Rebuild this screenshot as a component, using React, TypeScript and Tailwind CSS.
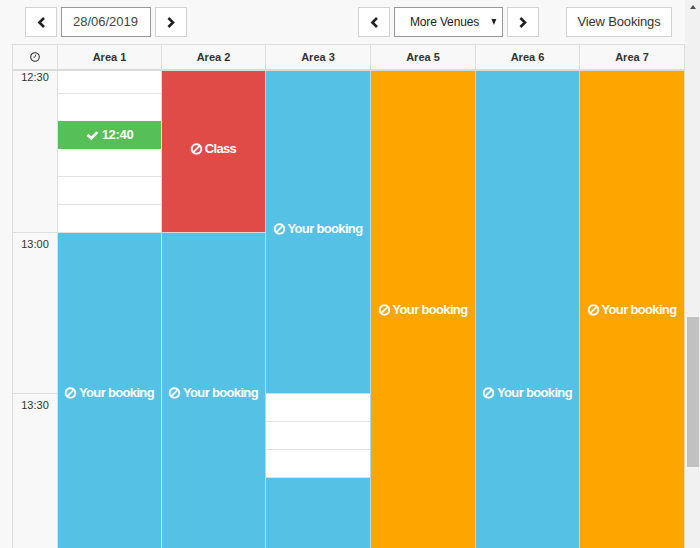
import React from "react";

const CHEVRON_LEFT = "M9 2 4.4 6.5 9 11";
const CHEVRON_RIGHT = "M3.4 2 8 6.5 3.4 11";

function Chevron({ d }: { d: string }) {
  return (
    <svg viewBox="0 0 12 13" className="h-[13px] w-3" fill="none" stroke="#222" strokeWidth="2.6">
      <path d={d} />
    </svg>
  );
}

function Ban() {
  return (
    <svg
      viewBox="0 70 1792 1792"
      className="mr-[2px] h-[13px] w-[13px] shrink-0"
      fill="currentColor"
      stroke="currentColor"
      strokeWidth="40"
    >
      <path d="M1440 893q0-161-87-295l-754 753q137 89 297 89 111 0 211.5-43.5t173.5-116.5 116-174.5 43-212.5zm-999 299l755-754q-135-91-300-91-148 0-273 73t-198 199-73 274q0 162 89 299zm1223-299q0 157-61 300t-163.5 246-245 164-298.5 61-298.5-61-245-164-163.5-246-61-300 61-299.5 163.5-245.5 245-164 298.5-61 298.5 61 245 164 163.5 245.5 61 299.5z" />
    </svg>
  );
}

function Check() {
  return (
    <svg viewBox="0 0 1792 1792" className="mr-[3px] h-[13px] w-[13px] shrink-0" fill="currentColor">
      <path d="M1671 566q0 40-28 68l-724 724-136 136q-28 28-68 28t-68-28l-136-136-362-362q-28-28-28-68t28-68l136-136q28-28 68-28t68 28l294 295 656-657q28-28 68-28t68 28l136 136q28 28 28 68z" />
    </svg>
  );
}

function Clock() {
  return (
    <svg viewBox="0 0 10 10" className="h-[10px] w-[10px]" fill="none" stroke="#333">
      <circle cx="5" cy="5" r="4.3" strokeWidth="1.1" />
      <path d="M5.9 2.4 5 5.2H3.4" strokeWidth="0.8" />
    </svg>
  );
}

function NavButton({ d }: { d: string }) {
  return (
    <button className="flex h-[30px] w-8 items-center justify-center border border-[#d2d2d2] bg-white">
      <Chevron d={d} />
    </button>
  );
}

function Booking({ label, className, labelClass }: { label: string; className: string; labelClass: string }) {
  return (
    <div className={`flex justify-center pr-px text-[13px] leading-4 font-bold tracking-[-0.66px] text-white ${className}`}>
      <div className={`flex h-4 items-center whitespace-nowrap ${labelClass}`}>
        <Ban />
        <span>{label}</span>
      </div>
    </div>
  );
}

const COLS = "grid grid-cols-[45px_104px_104px_105px_105px_104px_105px]";
const AREAS = ["Area 1", "Area 2", "Area 3", "Area 5", "Area 6", "Area 7"];
const SLOT = "border-b border-[#e2e2e2] bg-white";
const COLUMN = "flex flex-col border-r border-[#b4dbe5]";

export default function App() {
  return (
    <div className="flex h-[548px] w-[700px] overflow-hidden bg-[#f8f8f8] font-['Liberation_Sans',Arial,sans-serif] text-[#333]">
      <div className="flex w-[685px] flex-col pl-3">
        <div className="flex h-11 items-start pt-[7px] pl-[13px]">
          <NavButton d={CHEVRON_LEFT} />
          <div className="ml-[4px] flex h-[30px] w-[90px] items-center justify-center border border-[#999] bg-white pr-px text-[13px] text-[#444]">
            28/06/2019
          </div>
          <div className="ml-[4px]">
            <NavButton d={CHEVRON_RIGHT} />
          </div>
          <div className="ml-[171px]">
            <NavButton d={CHEVRON_LEFT} />
          </div>
          <div className="ml-[4px] flex h-[30px] w-[109px] items-center border border-[#999] bg-white pl-[15px] text-[12px] text-[#222]">
            <span className="w-[69px] tracking-[-0.15px] whitespace-nowrap">More Venues</span>
            <svg viewBox="0 0 6 6" className="ml-[12px] h-[6px] w-[6px]" fill="#222">
              <path d="M0.4 0H5.4L2.9 6Z" />
            </svg>
          </div>
          <div className="ml-[4px]">
            <NavButton d={CHEVRON_RIGHT} />
          </div>
          <button className="ml-[27px] h-[30px] w-[106px] border border-[#d2d2d2] bg-white text-[13px] tracking-[-0.15px] whitespace-nowrap text-[#333]">
            View Bookings
          </button>
        </div>

        <div className="flex flex-1 flex-col border-l border-[#dedede]">
          <div className={`${COLS} h-[27px] border-t border-b-2 border-t-[#dedede] border-b-[#dadada] text-[11px] font-bold`}>
            <div className="flex items-center justify-center border-r border-[#dedede]">
              <Clock />
            </div>
            {AREAS.map((a) => (
              <div key={a} className="flex items-center justify-center border-r border-[#dedede]">
                {a}
              </div>
            ))}
          </div>

          <div className={`${COLS} h-[477px]`}>
            <div className="flex flex-col border-r border-[#dedede] text-center text-[11px] leading-[13px]">
              <div className="h-[162px] border-b border-[#dedede]">12:30</div>
              <div className="h-[161px] border-b border-[#dedede] pt-[5px]">13:00</div>
              <div className="pt-[5px]">13:30</div>
            </div>

            <div className="flex flex-col border-r border-[#dedede]">
              <div className={`${SLOT} h-[23px]`} />
              <div className="h-[27px] bg-white" />
              <div className="flex h-[28px] items-center justify-center bg-[#57bf57] text-[13px] font-bold tracking-[-0.3px] text-white">
                <Check />
                12:40
              </div>
              <div className={`${SLOT} h-[28px]`} />
              <div className={`${SLOT} h-[28px]`} />
              <div className={`${SLOT} h-[28px]`} />
              <Booking label="Your booking" className="flex-1 bg-[#54c1e5]" labelClass="mt-[152px]" />
            </div>

            <div className={COLUMN}>
              <Booking label="Class" className="h-[162px] border-b border-[#d7d7d7] bg-[#e04b47]" labelClass="mt-[70px]" />
              <Booking label="Your booking" className="flex-1 bg-[#54c1e5]" labelClass="mt-[152px]" />
            </div>

            <div className={COLUMN}>
              <Booking label="Your booking" className="h-[323px] border-b border-[#c5dfe6] bg-[#54c1e5]" labelClass="mt-[150px]" />
              <div className={`${SLOT} h-[28px]`} />
              <div className={`${SLOT} h-[28px]`} />
              <div className={`${SLOT} h-[28px]`} />
              <div className="flex-1 bg-[#54c1e5]" />
            </div>

            <div className={COLUMN}>
              <Booking label="Your booking" className="flex-1 bg-[#ffa500]" labelClass="mt-[231px]" />
            </div>
            <div className={COLUMN}>
              <Booking label="Your booking" className="flex-1 bg-[#54c1e5]" labelClass="mt-[314px]" />
            </div>
            <div className="flex flex-col border-r border-[#e8d8b0]">
              <Booking label="Your booking" className="flex-1 bg-[#ffa500]" labelClass="mt-[231px]" />
            </div>
          </div>
        </div>
      </div>

      <div className="flex w-[15px] flex-col items-center bg-[#f1f1f1] pt-[5px]">
        <svg viewBox="0 0 6 4" className="h-1 w-[6px]" fill="#505050">
          <path d="M0 4 3 0 6 4Z" />
        </svg>
        <div className="mt-[308px] h-[150px] w-3 bg-[#c1c1c1]" />
      </div>
    </div>
  );
}
